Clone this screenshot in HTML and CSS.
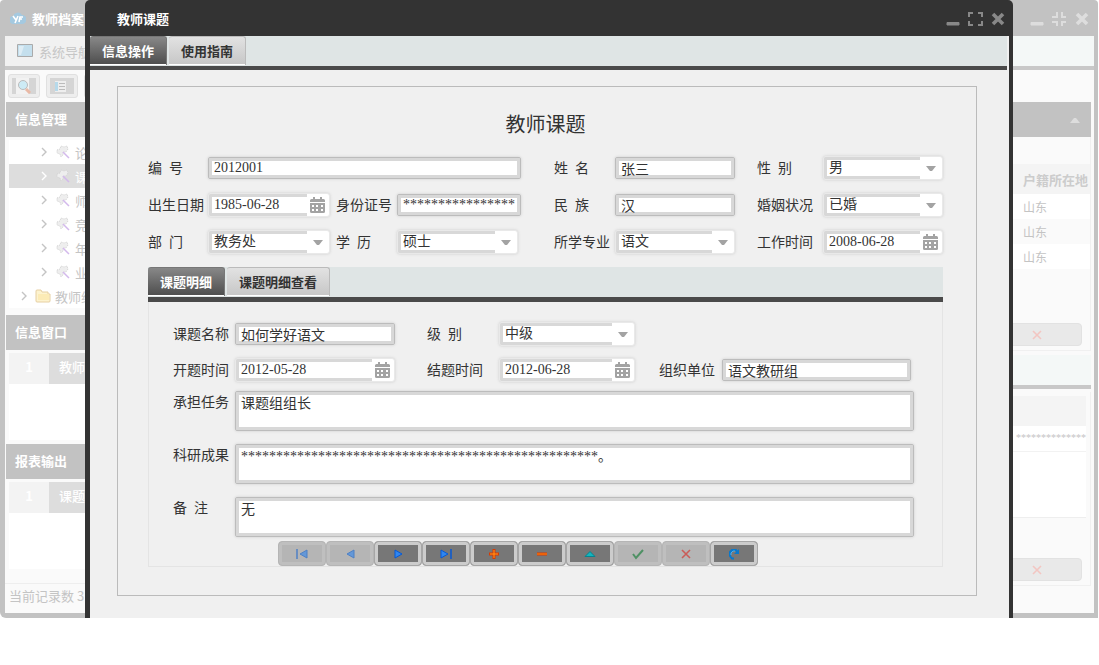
FILE: index.html
```html
<!DOCTYPE html>
<html lang="zh-CN">
<head>
    <meta charset="UTF-8">
    <meta name="viewport" content="width=device-width, initial-scale=1.0">
    <title>教师课题</title>
    <link rel="stylesheet" href="styles.css">
</head>
<body>
    <!-- shared icons -->
    <svg class="sprite" aria-hidden="true">
        <symbol id="i-min" viewBox="0 0 16 16"><path d="M2 10.500h12v2.500H2z" fill="currentColor" stroke="currentColor" stroke-linejoin="round"/></symbol>
        <symbol id="i-max" viewBox="0 0 16 16"><path d="M2 5V1h4M11 1h4v4M15 9v4h-4M6 13H2V9" fill="none" stroke="currentColor" stroke-width="2"/></symbol>
        <symbol id="i-restore" viewBox="0 0 16 16"><path d="M1 5h5V0M11 0v5h4M15 10h-4v4M6 14v-4H1" fill="none" stroke="currentColor" stroke-width="2"/></symbol>
        <symbol id="i-close" viewBox="0 0 16 16"><path d="M4 2l10 10M14 2L4 12" fill="none" stroke="currentColor" stroke-width="3.600"/></symbol>
        <symbol id="i-cal" viewBox="0 0 16 16"><path d="M3 0h2v2h5V0h2v2h1.500q1.500 0 1.500 1.500V5H0V3.500Q0 2 1.500 2H3z" fill="#a3a3a3"/><path d="M0 6h15v8.500Q15 16 13.500 16h-12Q0 16 0 14.500z" fill="#a3a3a3"/><path d="M2 8h2v2H2zM6 8h2v2H6zM11 8h2v2h-2zM2 12h2v2H2zM6 12h2v2H6zM11 12h2v2h-2z" fill="#fff"/></symbol>
        <symbol id="i-arrow" viewBox="0 0 10 6"><path d="M0 0h10L6 5H4z" fill="#a3a3a3"/></symbol>
        <symbol id="i-chev" viewBox="0 0 8 10"><path d="M2 1l4 4-4 4" fill="none" stroke="currentColor" stroke-width="1.400"/></symbol>
        <symbol id="i-wand" viewBox="0 0 15 15"><path d="M1 5l3-1 1-3 3 1 3-1 1 3-2 3-3 0 0 3-2 2-1-3-3-1z" fill="#eee" stroke="#d2d2d2" stroke-dasharray="1 1"/><path d="M7 7l6 6" stroke="#d3b9ec" stroke-width="1.500"/></symbol>
        <symbol id="i-x" viewBox="0 0 12 12"><path d="M2 2l8 8M10 2l-8 8" fill="none" stroke="currentColor" stroke-width="1.600"/></symbol>
    </svg>

    <div class="desktop">
        <div class="window">
            <header class="titlebar">
                <svg class="logo" viewBox="0 0 16 14"><path d="M4 13a4 4 0 0 1-1-8 5 5 0 0 1 9-1 4.500 4.500 0 0 1 0 9z" fill="#a4c9e0"/><path d="M3 5l3 4M8 5l-3 7M9 11l1-5h3M9 8h3" stroke="#fff" stroke-width="1.600" fill="none"/></svg>
                <h1>教师档案</h1>
                <div class="window-btns">
                    <button type="button" aria-label="最小化"><svg><use href="#i-min"/></svg></button>
                    <button type="button" aria-label="还原"><svg><use href="#i-restore"/></svg></button>
                    <button type="button" aria-label="关闭"><svg><use href="#i-close"/></svg></button>
                </div>
            </header>
            <nav class="main-tabs">
                <svg class="screen" viewBox="0 0 16 14"><path d="M.5.500h15v12H.5z" fill="#c4dfed" stroke="#aaa"/><path d="M2 2h5L4 11H2z" fill="#deedf5"/></svg>
                <a href="#">系统导航</a>
            </nav>
            <div class="window-body">
                <aside class="sidebar">
                    <div class="tools">
                        <button type="button" aria-label="查找"><svg viewBox="0 0 24 16"><path d="M0 0h24v16H0z" fill="#d5d5d5"/><path d="M4 0h13v16H4z" fill="#f2f2f2"/><circle cx="11" cy="7" r="4.500" fill="#cdebf5" stroke="#bbb"/><path d="M14 11l4 4" stroke="#e9b9a6" stroke-width="3"/></svg></button>
                        <button type="button" aria-label="列表"><svg viewBox="0 0 24 16"><path d="M0 0h24v16H0z" fill="#d5d5d5"/><path d="M5 3h11v11H5z" fill="#eee"/><path d="M5 4h3v9H5z" fill="#b6d9ea"/><path d="M9 5.500h6M9 8.500h6M9 11.500h6" stroke="#bbb"/></svg></button>
                        <button type="button" aria-label="更多"></button>
                    </div>
                    <h2>信息管理</h2>
                    <ul class="tree">
                        <li><svg class="chev"><use href="#i-chev"/></svg><svg class="wand"><use href="#i-wand"/></svg>论</li>
                        <li class="selected"><svg class="chev"><use href="#i-chev"/></svg><svg class="wand"><use href="#i-wand"/></svg>课</li>
                        <li><svg class="chev"><use href="#i-chev"/></svg><svg class="wand"><use href="#i-wand"/></svg>师</li>
                        <li><svg class="chev"><use href="#i-chev"/></svg><svg class="wand"><use href="#i-wand"/></svg>竞</li>
                        <li><svg class="chev"><use href="#i-chev"/></svg><svg class="wand"><use href="#i-wand"/></svg>年</li>
                        <li><svg class="chev"><use href="#i-chev"/></svg><svg class="wand"><use href="#i-wand"/></svg>业</li>
                        <li class="folder-row"><svg class="chev"><use href="#i-chev"/></svg><svg class="folder" viewBox="0 0 16 14"><path d="M1 12V2q0-1 1-1h4l1 2h6v2h2v7q0 1-1 1H2q-1 0-1-1z" fill="#fdf3cf" stroke="#e6cfa2"/><path d="M3 5h11v6H3z" fill="#fcebb6"/></svg>教师综</li>
                    </ul>
                    <h2>信息窗口</h2>
                    <div class="list"><div class="list-row"><b>1</b><span>教师</span></div></div>
                    <h2>报表输出</h2>
                    <div class="list"><div class="list-row"><b>1</b><span>课题</span></div></div>
                    <div class="status">当前记录数 3</div>
                </aside>
                <main class="content">
                    <div class="band"><svg viewBox="0 0 10 6"><path d="M0 6h10L6 1H4z" fill="#ddd"/></svg></div>
                    <section class="pane pane-top">
                        <table>
                            <tr><th></th><th class="last">户籍所在地</th></tr>
                            <tr><td></td><td>山东</td></tr>
                            <tr><td></td><td>山东</td></tr>
                            <tr><td></td><td>山东</td></tr>
                        </table>
                        <div class="pane-foot"><button type="button" aria-label="取消"><svg><use href="#i-x"/></svg></button></div>
                    </section>
                    <div class="sub-tabs"></div>
                    <section class="pane pane-bottom">
                        <table>
                            <tr><th></th></tr>
                            <tr><td class="stars">**************</td></tr>
                        </table>
                        <div class="blank"></div>
                        <div class="pane-foot"><button type="button" aria-label="取消"><svg><use href="#i-x"/></svg></button></div>
                    </section>
                </main>
            </div>
        </div>

        <div class="dialog" role="dialog" aria-labelledby="dialog-title">
            <header class="titlebar">
                <h1 id="dialog-title">教师课题</h1>
                <div class="window-btns">
                    <button type="button" aria-label="最小化"><svg><use href="#i-min"/></svg></button>
                    <button type="button" aria-label="最大化"><svg><use href="#i-max"/></svg></button>
                    <button type="button" aria-label="关闭"><svg><use href="#i-close"/></svg></button>
                </div>
            </header>
            <div class="dialog-body">
                <div class="tabs">
                    <button type="button" class="tab active">信息操作</button>
                    <button type="button" class="tab">使用指南</button>
                </div>
                <form class="sheet">
                    <h2>教师课题</h2>
                    <div class="fields">
                        <label for="no">编&nbsp;&nbsp;号</label>
                        <input class="text wide" id="no" type="text" value="2012001">
                        <label for="name">姓&nbsp;&nbsp;名</label>
                        <input class="text" id="name" type="text" value="张三">
                        <label for="sex">性&nbsp;&nbsp;别</label>
                        <div class="combo"><select id="sex"><option>男</option></select><span class="drop"><svg class="arrow"><use href="#i-arrow"/></svg></span></div>

                        <label for="birth">出生日期</label>
                        <div class="combo"><input id="birth" type="text" value="1985-06-28"><button type="button" class="drop" aria-label="选择日期"><svg class="cal"><use href="#i-cal"/></svg></button></div>
                        <label for="idno">身份证号</label>
                        <input class="text" id="idno" type="text" value="****************">
                        <label for="nation">民&nbsp;&nbsp;族</label>
                        <input class="text" id="nation" type="text" value="汉">
                        <label for="marriage">婚姻状况</label>
                        <div class="combo"><select id="marriage"><option>已婚</option></select><span class="drop"><svg class="arrow"><use href="#i-arrow"/></svg></span></div>

                        <label for="dept">部&nbsp;&nbsp;门</label>
                        <div class="combo"><select id="dept"><option>教务处</option></select><span class="drop"><svg class="arrow"><use href="#i-arrow"/></svg></span></div>
                        <label for="degree">学&nbsp;&nbsp;历</label>
                        <div class="combo short"><select id="degree"><option>硕士</option></select><span class="drop"><svg class="arrow"><use href="#i-arrow"/></svg></span></div>
                        <label for="major">所学专业</label>
                        <div class="combo"><select id="major"><option>语文</option></select><span class="drop"><svg class="arrow"><use href="#i-arrow"/></svg></span></div>
                        <label for="work">工作时间</label>
                        <div class="combo"><input id="work" type="text" value="2008-06-28"><button type="button" class="drop" aria-label="选择日期"><svg class="cal"><use href="#i-cal"/></svg></button></div>
                    </div>

                    <div class="tabs">
                        <button type="button" class="tab active">课题明细</button>
                        <button type="button" class="tab">课题明细查看</button>
                    </div>
                    <div class="detail">
                        <div class="detail-fields">
                            <label for="topic">课题名称</label>
                            <input class="text" id="topic" type="text" value="如何学好语文">
                            <label for="level">级&nbsp;&nbsp;别</label>
                            <div class="combo"><select id="level"><option>中级</option></select><span class="drop"><svg class="arrow"><use href="#i-arrow"/></svg></span></div>

                            <label class="row-start" for="start">开题时间</label>
                            <div class="combo"><input id="start" type="text" value="2012-05-28"><button type="button" class="drop" aria-label="选择日期"><svg class="cal"><use href="#i-cal"/></svg></button></div>
                            <label for="end">结题时间</label>
                            <div class="combo"><input id="end" type="text" value="2012-06-28"><button type="button" class="drop" aria-label="选择日期"><svg class="cal"><use href="#i-cal"/></svg></button></div>
                            <label for="org">组织单位</label>
                            <input class="text" id="org" type="text" value="语文教研组">
                        </div>
                        <div class="notes">
                            <label for="task">承担任务</label>
                            <textarea id="task">课题组组长</textarea>
                            <label for="result">科研成果</label>
                            <textarea id="result">***************************************************。</textarea>
                            <label for="memo">备&nbsp;&nbsp;注</label>
                            <textarea id="memo">无</textarea>
                        </div>
                        <div class="navigator">
                            <button type="button" disabled aria-label="首条"><svg viewBox="0 0 12 12"><path d="M1 1v10" stroke="#0b5fd0" stroke-width="1.500"/><path d="M11 2v8L4 6z" fill="#2f86f0" stroke="#0b5fd0"/></svg></button>
                            <button type="button" disabled aria-label="上一条"><svg viewBox="0 0 12 12"><path d="M10 2v8L3 6z" fill="#2f86f0" stroke="#0b5fd0"/></svg></button>
                            <button type="button" aria-label="下一条"><svg viewBox="0 0 12 12"><path d="M3 2v8l7-4z" fill="#2f86f0" stroke="#0659d4"/></svg></button>
                            <button type="button" aria-label="末条"><svg viewBox="0 0 12 12"><path d="M1 2v8l7-4z" fill="#2f86f0" stroke="#0659d4"/><path d="M11 1v10" stroke="#0659d4" stroke-width="1.500"/></svg></button>
                            <button type="button" aria-label="新增"><svg viewBox="0 0 12 12"><path d="M6 1v10M1 6h10" stroke="#d93a00" stroke-width="3"/><path d="M6 2v8M2 6h8" stroke="#ff9a1f"/></svg></button>
                            <button type="button" aria-label="删除"><svg viewBox="0 0 12 12"><path d="M1 6h10" stroke="#d93a00" stroke-width="3"/><path d="M1 6h10" stroke="#ff8a10"/></svg></button>
                            <button type="button" aria-label="修改"><svg viewBox="0 0 12 12"><path d="M1 8.500l5-5 5 5z" fill="#12b5bf" stroke="#07848f"/></svg></button>
                            <button type="button" disabled aria-label="保存"><svg viewBox="0 0 12 12"><path d="M1 6l3 4 7-8" fill="none" stroke="#0c7a30" stroke-width="2"/></svg></button>
                            <button type="button" class="cancel" disabled aria-label="取消"><svg><use href="#i-x"/></svg></button>
                            <button type="button" aria-label="刷新"><svg viewBox="0 0 12 12"><path d="M6 10.500H4L2 8V4l2-2h4l2 3" fill="none" stroke="#0878cc" stroke-width="2"/><path d="M11 1v5H6z" fill="#0878cc"/><path d="M3 7V5l2-2h2" fill="none" stroke="#4cb0ef"/></svg></button>
                        </div>
                    </div>
                </form>
            </div>
        </div>
    </div>
</body>
</html>
```

FILE: styles.css
```css
* {
    box-sizing: border-box;
}

body {
    margin: 0;
    background: #fff;
    color: #333;
    font-family: "Noto Sans CJK SC", sans-serif;
    font-size: 13px;
}

button {
    padding: 0;
    border: none;
    background: none;
    font-family: inherit;
}

svg {
    display: block;
    flex: none;
}

h1, h2 {
    margin: 0;
    font-size: 13px;
}

.sprite {
    position: absolute;
    width: 0;
    height: 0;
}

.desktop {
    position: relative;
    overflow: hidden;
}

/* title bars */
.titlebar {
    display: flex;
    align-items: center;
    height: 36px;
    padding: 0 9px 0 10px;
    color: #fff;
}

.window-btns {
    display: flex;
    gap: 6px;
    margin-left: auto;
    padding-top: 4px;
}

.window-btns button {
    color: inherit;
}

.window-btns svg {
    width: 16px;
    height: 16px;
}

/* window in the back */
.window {
    margin-right: 1px;
    background: #c2c2c2;
    border-radius: 4px 4px 0 6px;
    padding-bottom: 5px;
}

.logo {
    width: 16px;
    height: 14px;
    margin-right: 6px;
}

.window .window-btns {
    color: #ddd;
}

.main-tabs {
    display: flex;
    align-items: center;
    gap: 6px;
    height: 34px;
    margin: 0 4px 0 5px;
    padding-left: 12px;
    background: linear-gradient(90deg, #f1f1f1 80px, #f4f8f7 80px);
    border-bottom: 4px solid #c8c8c8;
}

.main-tabs a {
    color: #c6c6c6;
    text-decoration: none;
}

.screen {
    width: 16px;
    height: 14px;
}

.window-body {
    display: flex;
    height: 543px;
    margin: 0 4px 0 5px;
    background: #fafafa;
}

.sidebar {
    width: 200px;
    color: #c4c4c4;
}

.tools {
    display: flex;
    gap: 6px;
    height: 32px;
    padding: 4px 3px;
}

.tools button {
    display: flex;
    align-items: center;
    justify-content: center;
    width: 32px;
    height: 24px;
    background: #eee;
    border: 1px solid #e0e0e0;
    border-radius: 3px;
}

.tools svg {
    width: 24px;
    height: 16px;
}

.sidebar h2 {
    height: 35px;
    margin-left: 1px;
    padding-left: 9px;
    background: #c2c2c2;
    color: #fff;
    line-height: 33px;
}

.tree {
    height: 178px;
    margin: 0;
    padding: 3px 4px 7px;
    list-style: none;
}

.tree li {
    display: flex;
    align-items: center;
    height: 24px;
    padding-left: 31px;
    background: #fff;
}

.tree .selected {
    background: #ddd;
    color: #fff;
}

.tree .folder-row {
    padding-left: 11px;
}

.chev {
    width: 8px;
    height: 10px;
    margin-right: 8px;
}

.wand {
    width: 15px;
    height: 15px;
    margin-right: 4px;
}

.folder {
    width: 16px;
    height: 14px;
    margin: 0 4px 0 -1px;
}

.list {
    height: 94px;
    padding: 3px 4px 4px;
    background: linear-gradient(#fff, #fff) 4px 3px / calc(100% - 8px) 87px no-repeat;
}

.list-row {
    display: flex;
    height: 31px;
    background: #ddd;
    color: #fff;
    line-height: 28px;
}

.list-row b {
    width: 40px;
    background: #f3f3f3;
    text-align: center;
}

.list-row span {
    padding-left: 10px;
    font-weight: 500;
}

.status {
    margin-top: 10px;
    padding: 0 4px;
    border-top: 1px solid #eee;
    line-height: 24px;
}

.content {
    flex: 1;
    padding: 32px 3px 0 0;
    color: #c4c4c4;
}

.band {
    display: flex;
    align-items: center;
    justify-content: flex-end;
    height: 35px;
    padding-right: 11px;
    background: #c2c2c2;
}

.band svg {
    width: 10px;
    height: 6px;
}

.pane {
    display: flex;
    flex-direction: column;
    border: 1px solid #f0f0f0;
    border-top: none;
}

.pane-top {
    height: 214px;
    padding-top: 27px;
}

.pane-bottom {
    height: 194px;
    padding: 4px 4px 0 0;
}

.pane table {
    width: 100%;
    border-collapse: collapse;
    table-layout: fixed;
}

.pane th {
    height: 30px;
    padding: 0;
    background: #f4f4f4;
    color: #ccc;
    text-align: left;
}

.pane td {
    height: 25px;
    padding: 0;
    background: #fff;
    font-size: 12px;
    line-height: 24px;
}

.pane tr:nth-child(odd) td {
    background: #fafafa;
}

.pane .last {
    width: 67px;
    white-space: nowrap;
}

.pane .stars {
    border-bottom: 1px solid #f2f2f2;
    font-family: "Liberation Serif", serif;
    font-size: 10px;
    text-align: right;
}

.blank {
    height: 66px;
    background: #fff;
    border-bottom: 1px solid #eee;
}

.pane-foot {
    display: flex;
    justify-content: flex-end;
    margin-top: auto;
    padding: 3px 8px 4px 0;
}

.pane-bottom .pane-foot {
    padding-right: 4px;
}

.pane-foot button {
    width: 90px;
    height: 23px;
    background: #e9e9e9;
    border: 1px solid #e2e2e2;
    border-radius: 4px;
    color: #f3c6c2;
}

.pane-foot svg {
    width: 12px;
    height: 12px;
    margin: 0 auto;
}

.sub-tabs {
    height: 34px;
    margin: 4px 0 3px;
    background: #f4f8f7;
    border-bottom: 4px solid #c8c8c8;
}

/* dialog on top of the window */
.dialog {
    position: absolute;
    top: 0;
    bottom: 0;
    left: 85px;
    right: 86px;
    background: #333;
    border-radius: 5px 5px 0 0;
    padding: 0 4px 0 5px;
}

.dialog .titlebar {
    padding: 0 4px 0 27px;
}

.dialog .window-btns {
    color: #888;
}

.dialog-body {
    height: calc(100% - 36px);
    background: #f0f0f0;
}

.tabs {
    display: flex;
    align-items: flex-start;
    gap: 2px;
    height: 35px;
    background: #dfe5e5;
    border-bottom: 5px solid #4a4a4a;
}

.dialog-body > .tabs {
    height: 34px;
    margin-right: 2px;
    border-bottom-width: 4px;
}

.tab {
    height: 29px;
    padding: 0 12px 2px;
    background: linear-gradient(#e2e2e2, #c6c6c6);
    border: 1px solid #bbb;
    border-width: 1px 1px 0 0;
    border-radius: 3px 3px 0 0;
    box-shadow: inset 0 -1px #fff;
    color: #333;
    font-size: 13px;
    font-weight: bold;
}

.tab.active {
    background: linear-gradient(#888, #4c4c4c);
    border-color: #777;
    color: #fff;
}

.sheet {
    margin: 16px 32px 0 27px;
    padding: 23px 33px 28px 30px;
    border: 1px solid #bbb;
}

.sheet h2 {
    margin-bottom: 18px;
    font-size: 20px;
    font-weight: normal;
    line-height: 28px;
    text-align: center;
}

.fields,
.detail-fields,
.notes {
    display: grid;
    align-items: center;
}

.sheet label,
.sheet input,
.sheet select,
.sheet textarea {
    color: #333;
    font-family: "Liberation Serif", "Noto Sans CJK SC", serif;
    font-size: 14px;
}

.sheet label {
    padding-top: 1px;
    line-height: 20px;
    white-space: nowrap;
}

.fields {
    grid-template-columns: 60px 122fr 67px 124fr 94px 120fr 88px 120fr;
    grid-auto-rows: 24px;
    row-gap: 13px;
    margin-bottom: 13px;
}

.fields label[for="idno"],
.fields label[for="degree"] {
    padding-left: 6px;
}

.fields label[for="name"],
.fields label[for="nation"],
.fields label[for="major"] {
    padding-left: 33px;
}

.fields label[for="sex"],
.fields label[for="marriage"],
.fields label[for="work"] {
    padding-left: 22px;
}

.wide {
    grid-column: span 3;
}

.short {
    margin-right: 3px;
}

.text,
.notes textarea {
    width: 100%;
    min-width: 0;
    background: #fff;
    border: 1px solid #bcbcbc;
    border-radius: 2px;
    box-shadow: inset 0 0 0 3px #d8d8d8, 0 0 3px #ccc;
    outline: none;
}

.text {
    height: 22px;
    padding: 0 5px;
    line-height: 18px;
}

.combo {
    display: flex;
    height: 24px;
    min-width: 0;
    background: #fff;
    border: 1px solid #e9e9e9;
    border-radius: 3px;
    box-shadow: 0 0 3px #ccc;
}

.combo input,
.combo select {
    flex: 1;
    width: 0;
    padding: 0 2px;
    background: #fff;
    border: 3px solid #d8d8d8;
    border-right: none;
    border-radius: 2px 0 0 2px;
    line-height: 16px;
    outline: none;
    appearance: none;
}

.drop {
    display: flex;
    align-items: center;
    justify-content: center;
    width: 22px;
}

.arrow {
    width: 10px;
    height: 6px;
    margin-top: 2px;
}

.cal {
    width: 16px;
    height: 16px;
}

.detail {
    padding: 20px 28px 0 24px;
    border: 1px solid #e4e4e4;
    border-top: none;
}

.detail-fields {
    grid-template-columns: 62px 160fr 104px 136fr 87px 189fr;
    grid-auto-rows: 24px;
    row-gap: 12px;
    padding-right: 3px;
}

.detail-fields .row-start {
    grid-column: 1;
}

.detail-fields label[for="level"],
.detail-fields label[for="end"] {
    padding-left: 32px;
}

.detail-fields label[for="org"] {
    padding-left: 24px;
}

.notes {
    grid-template-columns: 62px 1fr;
    align-items: start;
    row-gap: 13px;
    margin-top: 9px;
}

.notes label {
    padding-top: 2px;
}

.notes textarea {
    display: block;
    height: 40px;
    padding: 3px 5px;
    line-height: 18px;
    resize: none;
}

.navigator {
    display: flex;
    margin-top: 4px;
    padding-left: 105px;
}

.navigator button {
    display: flex;
    align-items: center;
    justify-content: center;
    width: 48px;
    height: 25px;
    background: #777;
    border: 1px solid #a6a6a6;
    border-radius: 4px;
    box-shadow: inset 0 0 0 3px #ccc;
}

.navigator button:disabled {
    background: #b5b5b5;
    border-color: #b5b5b5;
    box-shadow: inset 0 0 0 3px #bfbfbf;
}

.navigator svg {
    width: 12px;
    height: 12px;
}

.navigator button:disabled svg {
    opacity: 0.6;
}

.cancel {
    color: #d8231c;
}
```
